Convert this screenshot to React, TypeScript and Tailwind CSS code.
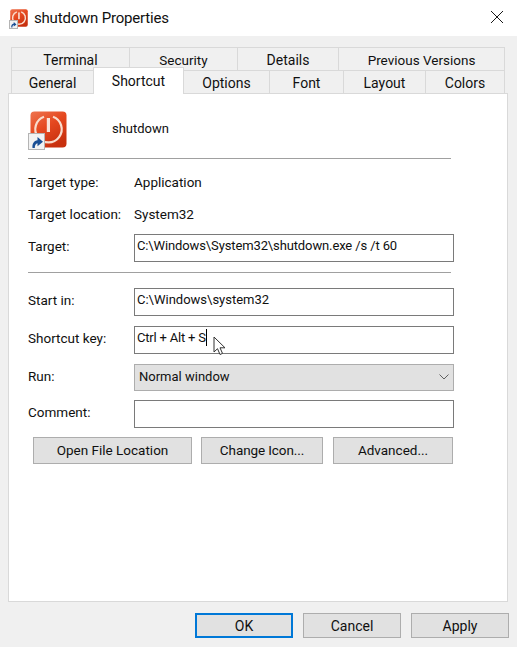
import React from "react";

function PowerIcon({ box, small }: { box: string; small?: boolean }) {
  return (
    <div className={"relative " + box}>
      <svg viewBox="0 0 37 37" className="block w-full h-full">
        <defs>
          <linearGradient id="redg" x1="0" y1="0" x2="0.6" y2="1">
            <stop offset="0" stopColor="#ee7450" />
            <stop offset="0.5" stopColor="#e5481f" />
            <stop offset="1" stopColor="#c8300e" />
          </linearGradient>
        </defs>
        <rect x="0.5" y="0.5" width="36" height="36" rx="4" fill="url(#redg)" />
        <path d="M14 5.8 A13.2 13.2 0 1 0 23 5.8" fill="none" stroke="#f9dccd" strokeWidth={small ? 3 : 2.2} />
        <rect x="16.8" y="7" width="3.2" height="14" fill="#f9e4da" />
      </svg>
      <div
        className={
          small
            ? "absolute w-[9px] h-[9px] -left-[1px] -bottom-[2px] bg-[#f2f2f2] border border-[#b4b4b4] flex items-center justify-center"
            : "absolute w-[17px] h-[17px] -left-[2px] -bottom-[2px] bg-[#f2f2f2] border border-[#b4b4b4] flex items-center justify-center"
        }
      >
        <svg viewBox="0 0 14 14" className={small ? "w-[7px] h-[7px]" : "w-[14px] h-[14px]"}>
          <path d="M2.5 13 C2 8.5 4 5.8 7.5 5.2 L7.5 2 L13 6.8 L7.5 11.2 L7.5 8.2 C5.8 8.5 4.8 10 4.8 13 Z" fill="#1a4f94" />
        </svg>
      </div>
    </div>
  );
}

function Tab({ w, label, extra }: { w: string; label: string; extra?: string }) {
  return (
    <div className={"h-full border-t border-l border-r border-[#d9d9d9] -mr-px flex items-center justify-center pt-[2px] shrink-0 " + w + " " + (extra ?? "")}>
      {label}
    </div>
  );
}

function Row({ label, cls, lift, children }: { label: string; cls: string; lift?: string; children: React.ReactNode }) {
  return (
    <div className={"flex items-center " + cls}>
      <div className={"w-[106px] shrink-0 text-[13.5px] " + (lift ?? "")}>{label}</div>
      {children}
    </div>
  );
}

function Field({ children }: { children?: React.ReactNode }) {
  return (
    <div className="relative w-[320px] h-full border border-[#7a7a7a] bg-white px-[2px] flex items-center pb-[5px] text-[13px]">
      {children}
    </div>
  );
}

function Btn({ w, label, focus }: { w: string; label: string; focus?: boolean }) {
  return (
    <div
      className={
        (focus
          ? "h-full bg-[#e1e1e1] border-2 border-[#0078d7] flex items-center justify-center "
          : "h-full bg-[#e1e1e1] border border-[#adadad] flex items-center justify-center ") + w
      }
    >
      {label}
    </div>
  );
}

export default function App() {
  return (
    <div className="w-[517px] h-[647px] bg-[#f0f0f0] overflow-hidden text-[14px] leading-5 text-[#101010] font-['Roboto',sans-serif]">
      <div className="h-9 bg-white flex items-center pl-[10px] pr-[13px]">
        <PowerIcon box="w-[18px] h-[18px]" small />
        <div className="ml-[6px] text-[15px] tracking-[-0.2px] flex-1">shutdown Properties</div>
        <svg width="14" height="14" viewBox="0 0 14 14" className="-mt-[2px]">
          <path d="M1 1 L13 13 M13 1 L1 13" stroke="#1a1a1a" strokeWidth="1" fill="none" />
        </svg>
      </div>

      <div className="pl-[11px] pt-[11px]">
        <div className="flex h-[23px]">
          <Tab w="w-[119px]" label="Terminal" />
          <Tab w="w-[109px]" label="Security" extra="text-[13.5px]" />
          <Tab w="w-[102px]" label="Details" />
          <Tab w="w-[167px]" label="Previous Versions" extra="text-[13.5px]" />
        </div>
        <div className="flex h-[23px] relative z-10">
          <Tab w="w-[83px]" label="General" />
          <div className="w-[91px] h-[27px] -mt-[3px] -mr-px bg-white border-t border-l border-r border-[#d9d9d9] flex items-center justify-center pb-[1px] shrink-0 relative z-10">
            Shortcut
          </div>
          <Tab w="w-[87px]" label="Options" />
          <Tab w="w-[75px]" label="Font" />
          <Tab w="w-[83px]" label="Layout" />
          <Tab w="w-[80px]" label="Colors" />
        </div>
      </div>

      <div className="ml-[8px] w-[500px] h-[509px] bg-white border border-[#d9d9d9] pl-[19px] pt-[17px]">
        <div className="flex items-center h-[37px]">
          <div className="w-[84px] pl-[2px]">
            <PowerIcon box="w-[37px] h-[37px]" />
          </div>
          <div className="-mt-[2px] text-[13px]">shutdown</div>
        </div>
        <div className="mt-[10px] w-[423px] h-px bg-[#a0a0a0]" />

        <Row label="Target type:" cls="h-5 mt-[13px]">
          <span className="text-[13.5px]">Application</span>
        </Row>
        <Row label="Target location:" cls="h-5 mt-[12px]">
          <span className="text-[13.5px]">System32</span>
        </Row>
        <Row label="Target:" cls="h-7 mt-[10px]" lift="-mt-[4px]">
          <Field>
            <span className="tracking-[-0.12px]">C:\Windows\System32\shutdown.exe /s /t 60</span>
          </Field>
        </Row>
        <div className="mt-[10px] w-[423px] h-px bg-[#a0a0a0]" />
        <Row label="Start in:" cls="h-7 mt-[15px]" lift="-mt-[4px]">
          <Field>C:\Windows\system32</Field>
        </Row>
        <Row label="Shortcut key:" cls="h-7 mt-[10px]" lift="-mt-[4px]">
          <Field>
            <span className="tracking-[-0.2px]">Ctrl + Alt + S</span>
            <span className="inline-block w-px h-[17px] bg-black" />
            <svg width="14" height="21" viewBox="0 0 14 21" className="absolute left-[78px] top-[9px]">
              <path d="M1 1 L1 16 L4.5 12.7 L7 18.5 L9.5 17.4 L7 11.8 L12 11.8 Z" fill="#fff" stroke="#333" strokeWidth="1" strokeLinejoin="miter" />
            </svg>
          </Field>
        </Row>
        <Row label="Run:" cls="h-[27px] mt-[10px]" lift="-mt-[4px]">
          <div className="w-[320px] h-full bg-[#e1e1e1] border border-[#adadad] flex items-center justify-between pl-[4px] pr-[4px] pb-[1px] text-[13px]">
            <span>Normal window</span>
            <svg width="10" height="6" viewBox="0 0 10 6">
              <path d="M0.5 0.5 L5 5 L9.5 0.5" fill="none" stroke="#606060" strokeWidth="1" />
            </svg>
          </div>
        </Row>
        <Row label="Comment:" cls="h-7 mt-[9px]" lift="-mt-[4px]">
          <Field />
        </Row>
        <div className="flex h-[27px] mt-[9px] ml-[5px] gap-[9px] text-[13.5px] leading-[18px]">
          <Btn w="w-[159px] pb-[2px]" label="Open File Location" />
          <Btn w="w-[122px] pb-[2px] tracking-[-0.1px]" label="Change Icon..." />
          <Btn w="w-[120px] ml-px pb-[2px]" label="Advanced..." />
        </div>
      </div>

      <div className="flex h-[25px] mt-[11px] ml-[195px] gap-[10px]">
        <Btn w="w-[98px]" label="OK" focus />
        <Btn w="w-[98px]" label="Cancel" />
        <Btn w="w-[98px]" label="Apply" />
      </div>
    </div>
  );
}
